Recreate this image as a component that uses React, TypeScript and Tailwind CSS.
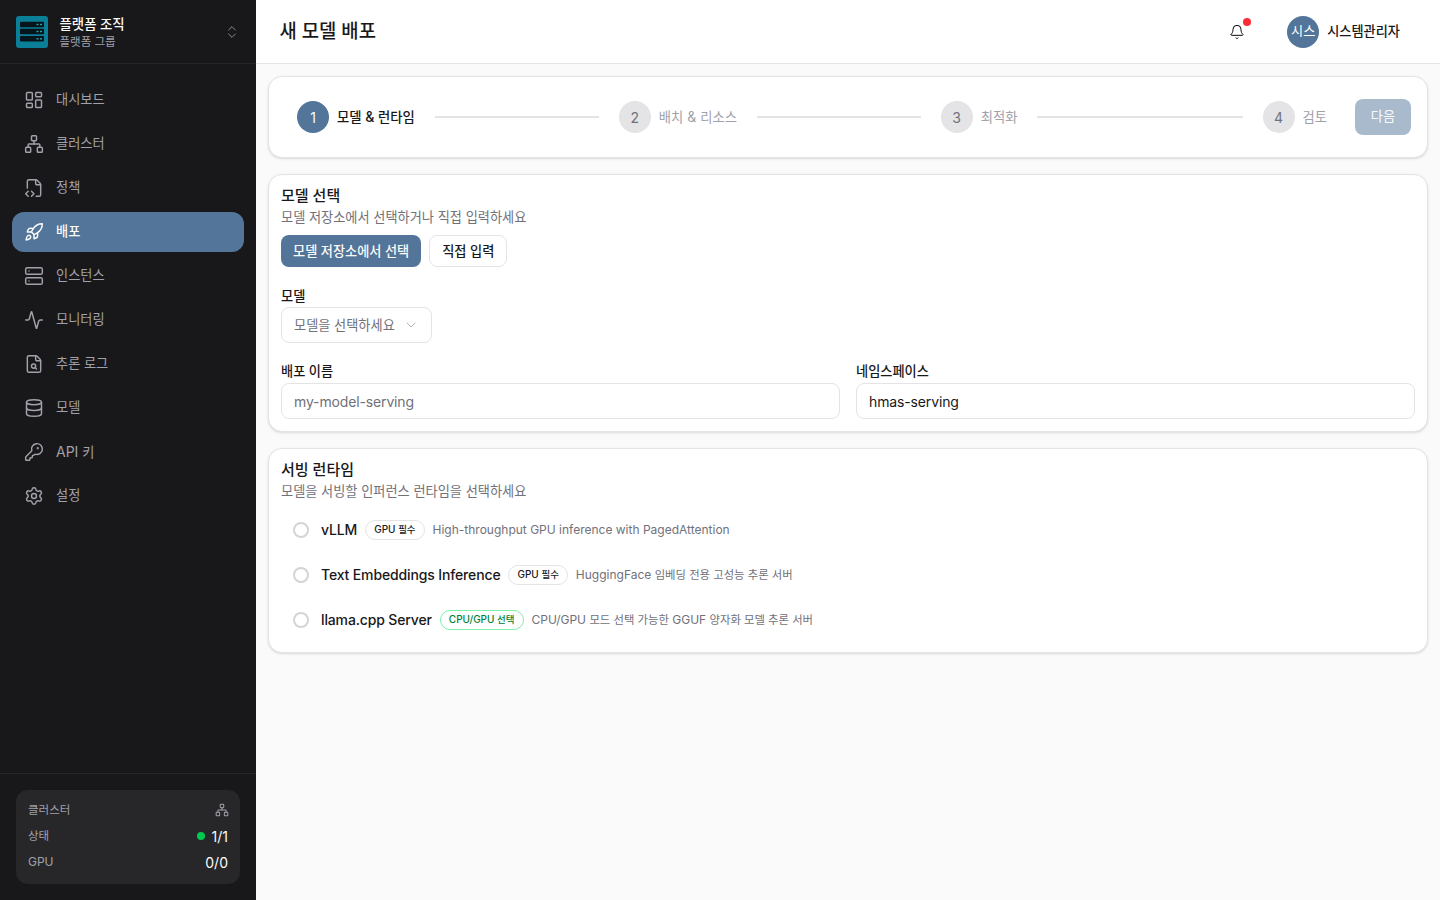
import React from "react";
import { LayoutDashboard, Network, FileCode2, Rocket, Server, Activity, FileSearch, Database, KeyRound, Settings, Bell, ChevronsUpDown, ChevronDown } from "lucide-react";

const font = "[font-family:Inter,'Noto_Sans_CJK_KR',sans-serif]";

function Mixed({ text, k }: { text: string; k: string }) {
  const parts = text.split(/([가-힣]+(?: [가-힣]+)*)/);
  return (
    <>
      {parts.map((p, i) => (i % 2 === 1 ? <span key={i} className={k}>{p}</span> : <span key={i}>{p}</span>))}
    </>
  );
}

const nav = [
  { label: "대시보드", Icon: LayoutDashboard },
  { label: "클러스터", Icon: Network },
  { label: "정책", Icon: FileCode2 },
  { label: "배포", Icon: Rocket, active: true },
  { label: "인스턴스", Icon: Server },
  { label: "모니터링", Icon: Activity },
  { label: "추론 로그", Icon: FileSearch },
  { label: "모델", Icon: Database },
  { label: "API 키", Icon: KeyRound },
  { label: "설정", Icon: Settings },
];

function Logo() {
  return (
    <svg width="32" height="32" viewBox="0 0 32 32" className="shrink-0">
      <rect width="32" height="32" rx="3" fill="#0b7f97" />
      <rect x="4" y="5.8" width="24" height="5.4" rx="0.8" fill="#06141c" />
      <rect x="4" y="12.8" width="24" height="5.4" rx="0.8" fill="#06141c" />
      <rect x="4" y="20" width="24" height="5.6" rx="0.8" fill="#06141c" />
      {[8.5, 15.5, 22.8].map((y) => (
        <g key={y} fill="#2aa6a6">
          <rect x="20.5" y={y - 0.7} width="2" height="1.4" />
          <rect x="24" y={y - 0.7} width="2" height="1.4" />
        </g>
      ))}
    </svg>
  );
}

function Sidebar() {
  return (
    <aside className="w-64 shrink-0 h-full bg-[#18181b] flex flex-col">
      <div className="h-16 shrink-0 border-b border-[#27272a] flex items-center pl-4 pr-4">
        <Logo />
        <div className="ml-[11.5px] pt-[2px] flex-1 min-w-0">
          <div className="text-[13.4px] leading-[18px] font-medium text-[#fafafa]">플랫폼 조직</div>
          <div className="text-[11.5px] leading-[18px] text-[#a1a1aa]">플랫폼 그룹</div>
        </div>
        <ChevronsUpDown size={16} strokeWidth={1.25} className="text-[#a1a1aa]" />
      </div>
      <nav className="flex-1 px-3 pt-4 flex flex-col gap-1">
        {nav.map(({ label, Icon, active }) => (
          <div
            key={label}
            className={`h-10 rounded-xl flex items-center pl-3 gap-3 ${label === "API 키" ? "text-[14px]" : "text-[13.2px]"} ${active ? "bg-[#527599] text-[#fafafa] font-medium" : "text-[#a1a1aa]"}`}
          >
            <Icon size={20} strokeWidth={1.75} />
            <span><Mixed text={label} k="text-[13.2px]" /></span>
          </div>
        ))}
      </nav>
      <div className="h-[127px] shrink-0 border-t border-[#27272a] p-4">
        <div className="h-[94px] rounded-xl bg-[#27272a] px-3 pt-[11px]">
          <div className="flex items-center justify-between h-[18px] text-[11.5px] text-[#a1a1aa]">
            <span className="pt-[2px]">클러스터</span>
            <Network size={14} strokeWidth={1.75} className="-mr-px" />
          </div>
          <div className="flex items-center justify-between mt-2 h-[18px] text-[11.5px] text-[#a1a1aa]">
            <span className="pt-[2px]">상태</span>
            <span className="flex items-center gap-[7px] text-[14px] text-[#fafafa]">
              <span className="w-2 h-2 rounded-full bg-[#00c950]" />
              1/1
            </span>
          </div>
          <div className="flex items-center justify-between mt-2 h-[18px] text-[12px] text-[#a1a1aa]">
            <span>GPU</span>
            <span className="text-[14px] text-[#fafafa]">0/0</span>
          </div>
        </div>
      </div>
    </aside>
  );
}

function Header() {
  return (
    <header className="h-16 shrink-0 bg-white border-b border-[#e4e4e7] flex items-center pl-[23.5px] pr-10">
      <h1 className="text-[18.8px] pt-[2px] font-medium text-[#18181b] flex-1">새 모델 배포</h1>
      <div className="relative mr-[42px] w-4 h-4 flex items-center justify-center">
        <Bell size={16} strokeWidth={1.5} className="text-[#09090b]" />
        <span className="absolute -top-[6px] left-[14px] w-2 h-2 rounded-full bg-[#fb2c36]" />
      </div>
      <div className="w-8 h-8 rounded-full bg-[#527599] text-white text-[13.2px] flex items-center justify-center">시스</div>
      <span className="ml-2 text-[13.2px] font-medium text-[#18181b]">시스템관리자</span>
    </header>
  );
}

function Step({ n, label, active, last }: { n: number; label: string; active?: boolean; last?: boolean }) {
  return (
    <div className={`flex items-center ${last ? "shrink-0" : "flex-1"}`}>
      <div className={`w-8 h-8 shrink-0 rounded-full flex items-center justify-center text-[14px] ${active ? "bg-[#527599] text-[#fafafa]" : "bg-[#e4e4e7] text-[#71717a]"}`}>{n}</div>
      <span className={`ml-2 shrink-0 text-[14px] ${active ? "font-medium text-[#18181b]" : "text-[#a1a1aa]"}`}>
        <Mixed text={label} k="text-[13.3px]" />
      </span>
      {!last && <div className="flex-1 h-[2px] bg-[#e4e4e7] mx-5" />}
    </div>
  );
}

const cardCls = "bg-white border border-[#e4e4e7] rounded-[14px] shadow-[0_1px_3px_rgba(0,0,0,0.1),0_1px_2px_-1px_rgba(0,0,0,0.1)]";

function Badge({ green, children }: { green?: boolean; children: string }) {
  return (
    <span className={`h-5 px-2 rounded-full border flex items-center text-[10px] font-medium bg-white ${green ? "border-[#7bf1a8] text-[#008236]" : "border-[#e4e4e7] text-[#18181b]"}`}>
      <span><Mixed text={children} k="text-[9.46px]" /></span>
    </span>
  );
}

function Radio({ name, badge, green, desc }: { name: string; badge: string; green?: boolean; desc: string }) {
  return (
    <div className="h-[45px] flex items-center pl-3">
      <span className="w-4 h-4 rounded-full border-2 border-[#d4d4d8] bg-white shrink-0" />
      <span className="ml-3 text-[14px] tracking-[-0.14px] font-medium text-[#18181b]">{name}</span>
      <span className="ml-2"><Badge green={green}>{badge}</Badge></span>
      <span className={`ml-2 text-[12px] text-[#71717a] ${/[가-힣]/.test(desc) ? "pt-[2px]" : ""}`}><Mixed text={desc} k="text-[11.35px]" /></span>
    </div>
  );
}

export default function App() {
  return (
    <div className={`${font} w-full h-screen flex overflow-hidden bg-[#fafafa]`}>
      <Sidebar />
      <div className="flex-1 min-w-0 flex flex-col">
        <Header />
        <main className="flex-1 px-3 pt-3 flex flex-col gap-4">
          <section className={`${cardCls} h-[82px] flex items-center pl-7 pr-4`}>
            <Step n={1} label="모델 & 런타임" active />
            <Step n={2} label="배치 & 리소스" />
            <Step n={3} label="최적화" />
            <Step n={4} label="검토" last />
            <button className="ml-7 w-14 h-9 rounded-lg bg-[#527599]/50 text-[#fafafa] text-[13.2px]">다음</button>
          </section>

          <section className={`${cardCls} h-[258px] px-3 pt-[10px]`}>
            <h2 className="text-[15px] leading-[22px] font-medium text-[#18181b]">모델 선택</h2>
            <p className="text-[13.2px] leading-[20px] text-[#71717a]">모델 저장소에서 선택하거나 직접 입력하세요</p>
            <div className="flex gap-2 mt-[8px]">
              <button className="h-8 px-3 pt-[2px] rounded-lg bg-[#527599] text-[#fafafa] text-[13.2px] font-medium">모델 저장소에서 선택</button>
              <button className="h-8 px-3 pt-[2px] rounded-lg border border-[#e4e4e7] bg-white text-[#18181b] text-[13.2px] font-medium">직접 입력</button>
            </div>
            <div className="mt-[19px] text-[13.2px] leading-[20px] font-medium text-[#18181b]">모델</div>
            <div className="mt-px h-9 w-[151px] rounded-lg border border-[#e4e4e7] bg-white flex items-center pl-3 pr-3 justify-between text-[13.2px] text-[#71717a]">
              <span className="pt-[2px]">모델을 선택하세요</span>
              <ChevronDown size={16} strokeWidth={1.25} className="text-[#a1a1aa]" />
            </div>
            <div className="grid grid-cols-2 gap-4 mt-[18px]">
              <div>
                <div className="text-[13.2px] leading-[20px] font-medium text-[#18181b]">배포 이름</div>
                <input readOnly placeholder="my-model-serving" className="mt-[2px] w-full h-9 rounded-lg border border-[#e4e4e7] bg-white px-3 text-[14px] tracking-[-0.14px] outline-none placeholder:text-[#71717a]" />
              </div>
              <div>
                <div className="text-[13.2px] leading-[20px] font-medium text-[#18181b]">네임스페이스</div>
                <input readOnly value="hmas-serving" className="mt-[2px] w-full h-9 rounded-lg border border-[#e4e4e7] bg-white px-3 text-[14px] tracking-[-0.14px] text-[#18181b] outline-none" />
              </div>
            </div>
          </section>

          <section className={`${cardCls} h-[205px] px-3 pt-[10px]`}>
            <h2 className="text-[15px] leading-[22px] font-medium text-[#18181b]">서빙 런타임</h2>
            <p className="text-[13.2px] leading-[20px] text-[#71717a]">모델을 서빙할 인퍼런스 런타임을 선택하세요</p>
            <div className="mt-[6px] flex flex-col">
              <Radio name="vLLM" badge="GPU 필수" desc="High-throughput GPU inference with PagedAttention" />
              <Radio name="Text Embeddings Inference" badge="GPU 필수" desc="HuggingFace 임베딩 전용 고성능 추론 서버" />
              <Radio name="llama.cpp Server" badge="CPU/GPU 선택" green desc="CPU/GPU 모드 선택 가능한 GGUF 양자화 모델 추론 서버" />
            </div>
          </section>
        </main>
      </div>
    </div>
  );
}
